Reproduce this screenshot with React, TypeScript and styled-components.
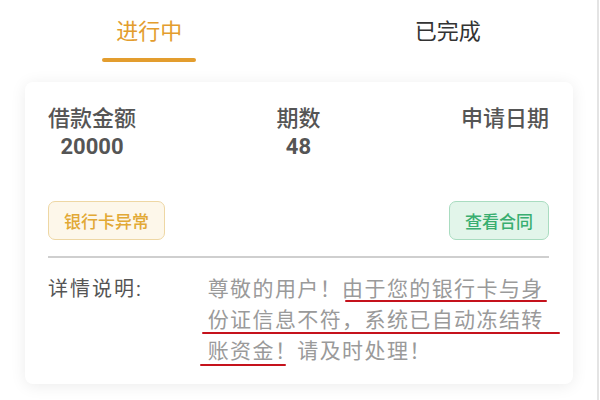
import React from "react";
import styled, { createGlobalStyle } from "styled-components";

const Global = createGlobalStyle`
  html, body { margin: 0; padding: 0; background: #ffffff; }
  body { font-family: Roboto, "Noto Sans CJK SC", sans-serif; }
`;

const Page = styled.div`
  width: 599px;
  height: 400px;
  box-sizing: border-box;
  border-right: 2px solid #e4e4e4;
  overflow: hidden;
  display: flex;
  flex-direction: column;
`;

const Tabs = styled.div`
  display: flex;
  height: 64px;
`;

const Tab = styled.div<{ $active?: boolean }>`
  flex: 1;
  display: flex;
  flex-direction: column;
  align-items: center;
  padding-top: 16px;
  font-size: 22px;
  font-weight: 400;
  line-height: 32px;
  color: ${(p) => (p.$active ? "#E39D2E" : "#333333")};
`;

const Underline = styled.div`
  margin-top: 10px;
  width: 94px;
  height: 4px;
  border-radius: 2px;
  background: #E39D2E;
`;

const Card = styled.div`
  margin: 18px 24px 0 25px;
  background: #fff;
  border-radius: 8px;
  box-shadow: 0 2px 16px rgba(0, 0, 0, 0.08);
  padding: 22px 24px 0 23px;
  height: 302px;
  box-sizing: border-box;
`;

const Stats = styled.div`
  display: flex;
  justify-content: space-between;
`;

const Stat = styled.div<{ $align: string }>`
  display: flex;
  flex-direction: column;
  align-items: ${(p) => p.$align};
  color: #555;
`;

const StatLabel = styled.div`
  font-size: 22px;
  font-weight: 500;
  line-height: 30px;
`;

const StatValue = styled.div`
  font-size: 22px;
  font-weight: 700;
  line-height: 26px;
`;

const Actions = styled.div`
  display: flex;
  justify-content: space-between;
  margin-top: 41px;
`;

const Badge = styled.div<{ $tone: "warn" | "ok" }>`
  height: 39px;
  box-sizing: border-box;
  padding: 0 15px;
  display: flex;
  align-items: center;
  border-radius: 7px;
  font-size: 17px;
  font-weight: 500;
  border: 1.5px solid ${(p) => (p.$tone === "warn" ? "#EED7A4" : "#A9DCC0")};
  background: ${(p) => (p.$tone === "warn" ? "#FDF7EA" : "#E2F5EA")};
  color: ${(p) => (p.$tone === "warn" ? "#E2A935" : "#39AE70")};
`;

const Divider = styled.div`
  margin-top: 16px;
  height: 1.5px;
  background: #cfcfcf;
`;

const Details = styled.div`
  display: flex;
  padding-top: 16px;
`;

const DetailLabel = styled.div`
  width: 160px;
  font-size: 20px;
  letter-spacing: 2px;
  line-height: 30px;
  color: #555;
`;

const Message = styled.div`
  position: relative;
  width: 342px;
  font-size: 21px;
  letter-spacing: 1.4px;
  line-height: 31px;
  color: #9a9a9a;
`;

const Mark = styled.div`
  position: absolute;
  height: 2.5px;
  border-radius: 1px;
  background: #C5121C;
`;

export default function App() {
  return (
    <>
      <Global />
      <Page>
        <Tabs>
          <Tab $active>
            进行中
            <Underline />
          </Tab>
          <Tab>已完成</Tab>
        </Tabs>
        <Card>
          <Stats>
            <Stat $align="center">
              <StatLabel>借款金额</StatLabel>
              <StatValue>20000</StatValue>
            </Stat>
            <Stat $align="center">
              <StatLabel>期数</StatLabel>
              <StatValue>48</StatValue>
            </Stat>
            <Stat $align="flex-end">
              <StatLabel>申请日期</StatLabel>
            </Stat>
          </Stats>
          <Actions>
            <Badge $tone="warn">银行卡异常</Badge>
            <Badge $tone="ok">查看合同</Badge>
          </Actions>
          <Divider />
          <Details>
            <DetailLabel>详情说明:</DetailLabel>
            <Message>
              尊敬的用户！由于您的银行卡与身份证信息不符，系统已自动冻结转账资金！请及时处理！
              <Mark style={{ left: 137, top: 26, width: 202 }} />
              <Mark style={{ left: -6, top: 58, width: 358 }} />
              <Mark style={{ left: -8, top: 90, width: 86 }} />
            </Message>
          </Details>
        </Card>
      </Page>
    </>
  );
}
